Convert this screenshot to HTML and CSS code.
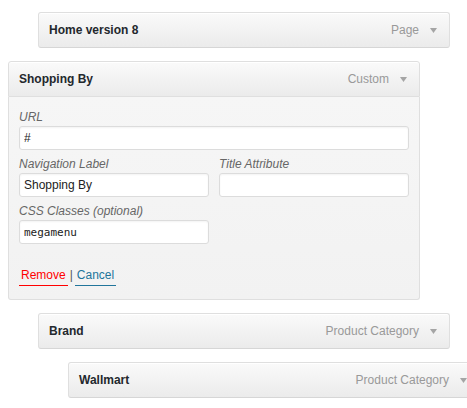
FILE: index.html
```html
<!DOCTYPE html>
<html lang="en">
<head>
<meta charset="utf-8">
<title>Menu items</title>
<link rel="stylesheet" href="styles.css">
</head>
<body>
<ul class="menu">
  <li class="menu-item depth-1">
    <div class="handle">
      <span class="item-title">Home version 8</span>
      <span class="item-controls"><span class="item-type">Page</span><svg class="arrow" width="7" height="5" viewBox="0 0 7 5"><polygon points="0,0 7,0 3.5,5"/></svg></span>
    </div>
  </li>
  <li class="menu-item depth-0 active">
    <div class="handle">
      <span class="item-title">Shopping By</span>
      <span class="item-controls"><span class="item-type">Custom</span><svg class="arrow" width="7" height="5" viewBox="0 0 7 5"><polygon points="0,0 7,0 3.5,5"/></svg></span>
    </div>
    <div class="settings">
      <div class="field">
        <label class="label">URL</label>
        <input class="input" type="text" value="#">
      </div>
      <div class="field-row">
        <div class="field">
          <label class="label">Navigation Label</label>
          <input class="input" type="text" value="Shopping By">
        </div>
        <div class="field">
          <label class="label">Title Attribute</label>
          <input class="input" type="text" value="">
        </div>
      </div>
      <div class="field-row">
        <div class="field">
          <label class="label">CSS Classes (optional)</label>
          <input class="input mono" type="text" value="megamenu">
        </div>
        <div class="field"></div>
      </div>
      <div class="actions">
        <a class="link remove" href="#">Remove</a><span class="sep">|</span><a class="link cancel" href="#">Cancel</a>
      </div>
    </div>
  </li>
  <li class="menu-item depth-1">
    <div class="handle">
      <span class="item-title">Brand</span>
      <span class="item-controls"><span class="item-type">Product Category</span><svg class="arrow" width="7" height="5" viewBox="0 0 7 5"><polygon points="0,0 7,0 3.5,5"/></svg></span>
    </div>
  </li>
  <li class="menu-item depth-2">
    <div class="handle">
      <span class="item-title">Wallmart</span>
      <span class="item-controls"><span class="item-type">Product Category</span><svg class="arrow" width="7" height="5" viewBox="0 0 7 5"><polygon points="0,0 7,0 3.5,5"/></svg></span>
    </div>
  </li>
</ul>
</body>
</html>
```

FILE: styles.css
```css
html, body {
  margin: 0;
  padding: 0;
  overflow: hidden;
  background: #fff;
}

body {
  font-family: "Liberation Sans", Arial, sans-serif;
  font-size: 12px;
  color: #333;
}

.menu {
  list-style: none;
  margin: 0;
  padding: 12px 0 0 0;
  display: flex;
  flex-direction: column;
  gap: 13px;
}

.menu-item {
  width: 412px;
  flex: none;
}

.depth-0 { margin-left: 8px; }
.depth-1 { margin-left: 38px; }
.depth-2 { margin-left: 68px; }

.handle {
  display: flex;
  justify-content: space-between;
  align-items: center;
  height: 34px;
  line-height: 34px;
  padding: 0 12px 0 10px;
  border: 1px solid #dfdfdf;
  border-bottom-color: #d6d6d6;
  border-radius: 3px;
  background: linear-gradient(#fafafa, #ebebeb);
  box-shadow: inset 0 1px 0 #fff;
}

.active .handle {
  border-radius: 3px 3px 0 0;
  border-bottom-color: #dfdfdf;
}

.item-title {
  font-weight: bold;
  color: #23282d;
}

.item-controls {
  display: flex;
  align-items: center;
  color: #999;
}

.arrow {
  margin-left: 11px;
  fill: #a5a5a5;
}

.settings {
  border: 1px solid #dfdfdf;
  border-top: 0;
  border-radius: 0 0 3px 3px;
  background: linear-gradient(#f6f6f6, #f2f2f2);
  padding: 6px 10px 16px 10px;
}

.field-row {
  display: grid;
  grid-template-columns: 1fr 1fr;
  column-gap: 10px;
}

.field {
  display: flex;
  flex-direction: column;
  margin-top: 6px;
}

.label {
  font-style: italic;
  color: #666;
  line-height: 16px;
  margin-bottom: 1px;
}

.input {
  box-sizing: border-box;
  width: 100%;
  height: 24px;
  margin: 0;
  padding: 0 4px;
  border: 1px solid #dcdcdc;
  border-radius: 3px;
  background: #fff;
  box-shadow: inset 0 1px 2px rgba(0, 0, 0, 0.05);
  font-family: "Liberation Sans", Arial, sans-serif;
  font-size: 12px;
  color: #222;
  outline: none;
}

.input.mono {
  font-family: "DejaVu Sans Mono", "Liberation Mono", monospace;
  font-size: 11px;
}

.actions {
  margin-top: 23px;
  line-height: 16px;
}

.link {
  text-decoration: none;
  padding: 1px 2px 3px 2px;
  border-bottom: 1px solid;
}

.remove { color: #ff0000; }
.cancel { color: #21759b; }
.sep {
  color: #555;
  margin: 0 2px;
}
```
